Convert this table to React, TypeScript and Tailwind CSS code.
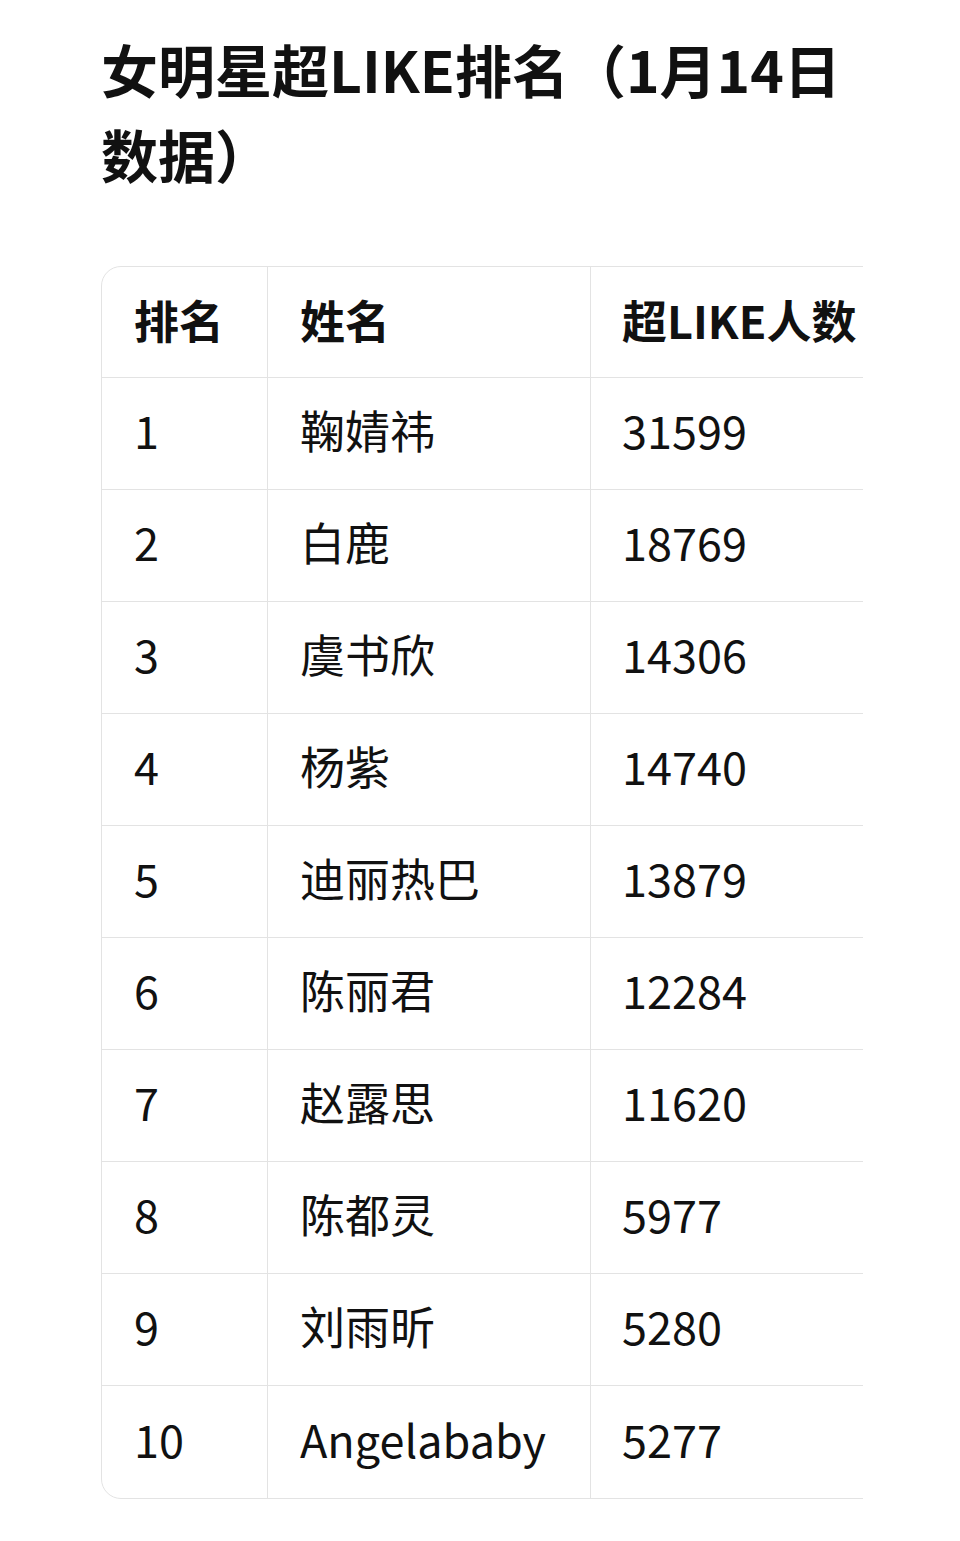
import React from 'react';

const rows = [
  { rank: '1', name: '鞠婧祎', count: '31599' },
  { rank: '2', name: '白鹿', count: '18769' },
  { rank: '3', name: '虞书欣', count: '14306' },
  { rank: '4', name: '杨紫', count: '14740' },
  { rank: '5', name: '迪丽热巴', count: '13879' },
  { rank: '6', name: '陈丽君', count: '12284' },
  { rank: '7', name: '赵露思', count: '11620' },
  { rank: '8', name: '陈都灵', count: '5977' },
  { rank: '9', name: '刘雨昕', count: '5280' },
  { rank: '10', name: 'Angelababy', count: '5277' },
];

const font = "font-['Noto_Sans_CJK_SC','Noto_Sans',sans-serif]";

export default function App() {
  return (
    <div className={`min-h-screen bg-white text-[#111] ${font} pl-[101px] pt-[26px] pb-[44px]`}>
      <h1 className="w-[762px] text-[57px] leading-[85px] font-bold">
        女明星超LIKE排名（1月14日数据）
      </h1>

      <div className="mt-[70px] w-[762px] overflow-hidden">
        <div className="w-[840px] border-[1.5px] border-[#e3e3e3] rounded-[20px] overflow-hidden">
          <div className="grid grid-cols-[166px_323px_351px] text-[45px]">
            <div className="h-[111px] flex items-center px-[32px] pb-[4px] font-bold border-r-[1.5px] border-b-[1.5px] border-[#e3e3e3]">排名</div>
            <div className="h-[111px] flex items-center px-[32px] pb-[4px] font-bold border-r-[1.5px] border-b-[1.5px] border-[#e3e3e3]">姓名</div>
            <div className="h-[111px] flex items-center px-[31px] pb-[4px] font-bold border-b-[1.5px] border-[#e3e3e3] whitespace-nowrap">超LIKE人数</div>
            {rows.map((r, i) => {
              const last = i === rows.length - 1;
              const bb = last ? '' : 'border-b-[1.5px]';
              return (
                <React.Fragment key={r.rank}>
                  <div className={`h-[112px] flex items-center px-[32px] pb-[7px] border-r-[1.5px] ${bb} border-[#e3e3e3]`}>{r.rank}</div>
                  <div className={`h-[112px] flex items-center px-[32px] pb-[7px] border-r-[1.5px] ${bb} border-[#e3e3e3]`}>{r.name}</div>
                  <div className={`h-[112px] flex items-center px-[31px] pb-[7px] ${bb} border-[#e3e3e3]`}>{r.count}</div>
                </React.Fragment>
              );
            })}
          </div>
        </div>
      </div>
    </div>
  );
}
